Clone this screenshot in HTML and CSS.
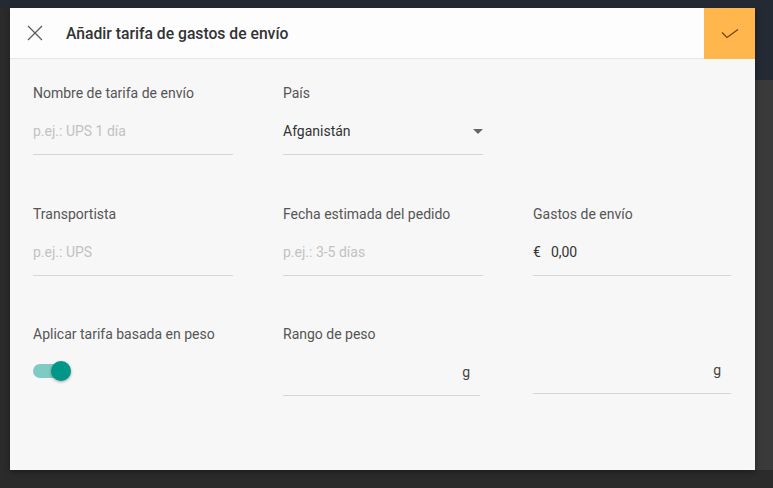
FILE: index.html
```html
<!DOCTYPE html>
<html lang="es">
<head>
<meta charset="utf-8">
<title>Añadir tarifa de gastos de envío</title>
<link rel="stylesheet" href="styles.css">
</head>
<body>
<div class="dialog">
  <div class="header">
    <button class="close" aria-label="Cerrar">
      <svg width="16" height="16" viewBox="0 0 16 16"><path d="M1 1 L15 15 M15 1 L1 15" stroke="#5c5c5c" stroke-width="1.3" fill="none"/></svg>
    </button>
    <h1 class="title">Añadir tarifa de gastos de envío</h1>
    <button class="confirm" aria-label="Guardar">
      <svg class="check" width="18" height="12" viewBox="0 0 18 12"><polyline points="1,4.5 6,9.5 17,1.5" stroke="#6e4614" stroke-width="1.3" fill="none"/></svg>
    </button>
  </div>
  <div class="body">
    <div class="field">
      <div class="label">Nombre de tarifa de envío</div>
      <div class="input placeholder">p.ej.: UPS 1 día</div>
    </div>
    <div class="field">
      <div class="label">País</div>
      <div class="input select">Afganistán<span class="arrow"></span></div>
    </div>
    <div class="field"></div>

    <div class="field">
      <div class="label">Transportista</div>
      <div class="input placeholder">p.ej.: UPS</div>
    </div>
    <div class="field">
      <div class="label">Fecha estimada del pedido</div>
      <div class="input placeholder">p.ej.: 3-5 días</div>
    </div>
    <div class="field">
      <div class="label">Gastos de envío</div>
      <div class="input"><span class="currency">€</span>0,00</div>
    </div>

    <div class="field">
      <div class="label">Aplicar tarifa basada en peso</div>
      <div class="switch"><span class="track"></span><span class="thumb"></span></div>
    </div>
    <div class="field">
      <div class="label">Rango de peso</div>
      <div class="input suffix narrow">g</div>
    </div>
    <div class="field">
      <div class="label">&nbsp;</div>
      <div class="input suffix raised">g</div>
    </div>
  </div>
</div>
</body>
</html>
```
FILE: styles.css
```css
* { box-sizing: border-box; }
html, body { margin: 0; height: 100%; }
body {
  font-family: Roboto, "Liberation Sans", sans-serif;
  background:
    linear-gradient(#242a33, #242a33) 0 0 / 100% 8px no-repeat,
    linear-gradient(#242a33, #242a33) right top / 18px 80px no-repeat,
    linear-gradient(#3a3a3a, #3a3a3a) right top / 18px 470px no-repeat,
    #2b2b2b;
  overflow: hidden;
}
.dialog {
  margin: 8px 0 0 10px;
  width: 745px;
  height: 462px;
  background: #f7f7f7;
  box-shadow: 0 2px 6px rgba(0,0,0,0.35);
}
.header {
  height: 51px;
  display: flex;
  align-items: center;
  background: #fdfdfd;
  border-bottom: 1px solid #e6e6e6;
}
.close {
  border: 0;
  background: none;
  padding: 0;
  margin-left: 17px;
  width: 16px;
  height: 16px;
  display: flex;
}
.title {
  margin: 0 0 0 23px;
  font-size: 15.7px;
  font-weight: 500;
  color: #333;
}
.confirm {
  margin-left: auto;
  width: 51px;
  height: 51px;
  align-self: flex-start;
  border: 0;
  padding: 0;
  background: #ffb74d;
  display: flex;
  align-items: center;
  justify-content: center;
}
.check { display: block; margin: 0 0 0 1px; flex: none; }
.body {
  display: grid;
  grid-template-columns: 200px 200px 198px;
  column-gap: 50px;
  row-gap: 50.5px;
  padding: 26px 0 0 23px;
}
.label {
  font-size: 14px;
  line-height: 16px;
  color: #555;
}
.input {
  margin-top: 12px;
  height: 42px;
  padding: 10px 0 0;
  font-size: 14px;
  line-height: 16px;
  color: #333;
  border-bottom: 1px solid #d6d6d6;
  position: relative;
}
.placeholder { color: #c2c2c2; }
.select .arrow {
  position: absolute;
  right: 0;
  top: 16px;
  width: 0;
  height: 0;
  border-left: 5px solid transparent;
  border-right: 5px solid transparent;
  border-top: 5px solid #666;
}
.currency { margin-right: 10px; }
.suffix {
  text-align: right;
  padding-right: 10px;
  color: #444;
}
.narrow { width: 197px; }
.raised { margin-top: 10px; }
.switch {
  position: relative;
  margin-top: 19px;
  width: 40px;
  height: 20px;
}
.track {
  position: absolute;
  left: 0;
  top: 3px;
  width: 34px;
  height: 14px;
  border-radius: 7px;
  background: #7fcac2;
}
.thumb {
  position: absolute;
  left: 18px;
  top: 0;
  width: 20px;
  height: 20px;
  border-radius: 50%;
  background: #009688;
  box-shadow: 0 1px 3px rgba(0,0,0,0.35);
}
```
